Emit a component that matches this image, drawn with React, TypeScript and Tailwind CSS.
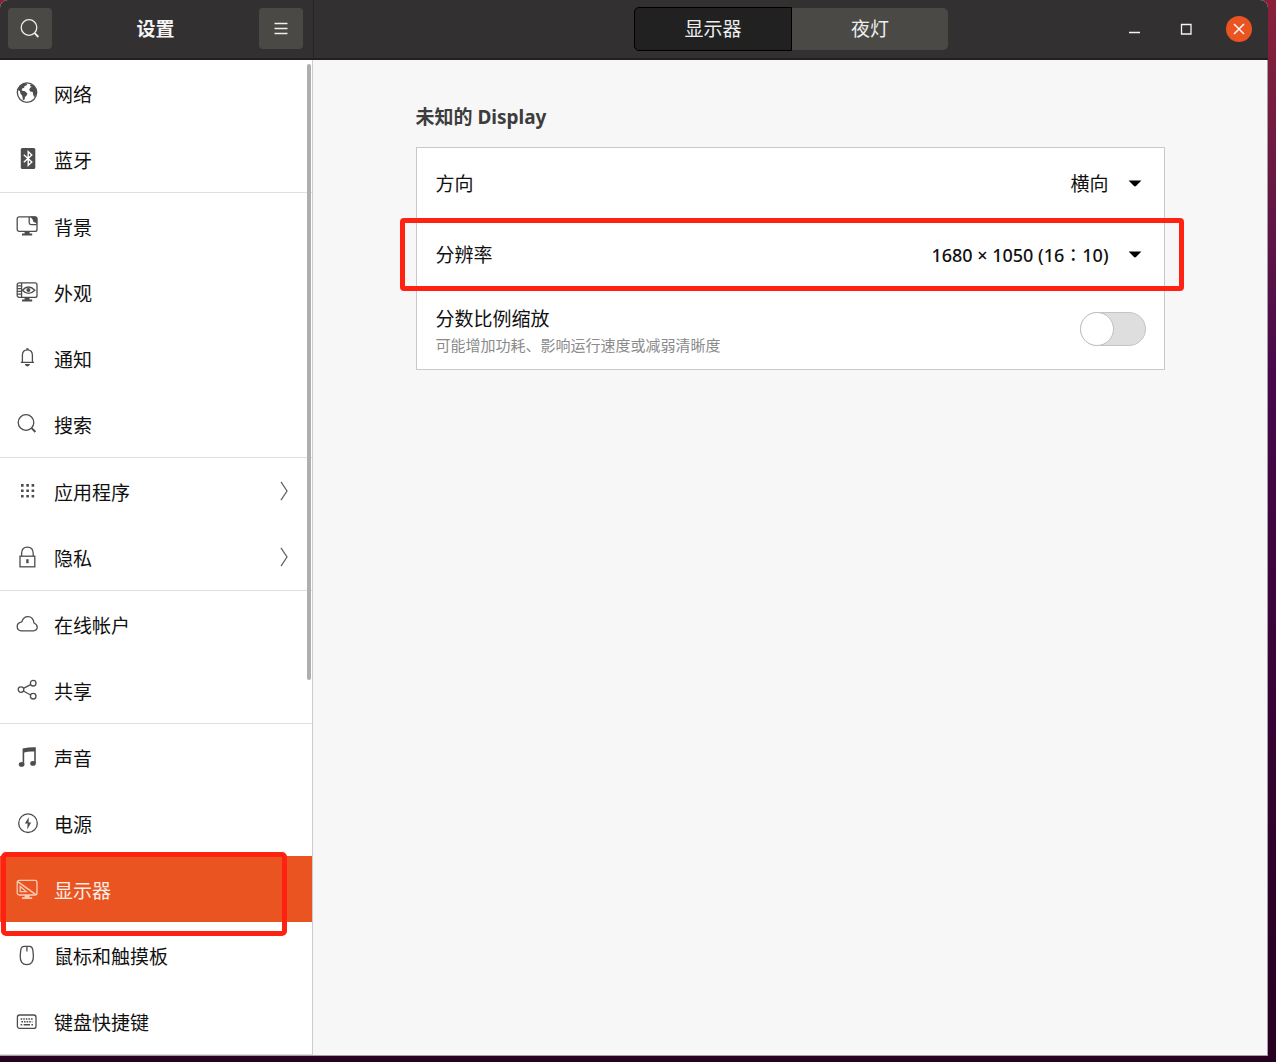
import { Fragment, type ReactNode } from 'react'

type Item = {
  label: string
  icon: ReactNode
  more?: boolean
  active?: boolean
}

function Icon({ children }: { children: ReactNode }) {
  return (
    <svg
      viewBox="0 0 22 22"
      className="size-[22px] shrink-0"
      fill="none"
      stroke="currentColor"
      strokeWidth="1.3"
      aria-hidden="true"
    >
      {children}
    </svg>
  )
}

const searchShape = (
  <>
    <circle cx="10" cy="9.5" r="7.8" />
    <path d="M15.6 15.2 19.4 19" strokeWidth="1.9" />
  </>
)

const monitorShape = (
  <>
    <rect x="1.2" y="1.8" width="19.8" height="14.6" rx="2" />
    <path d="M8.6 16.4h5v2.2h2.6v1.8H6v-1.8h2.6z" fill="currentColor" stroke="none" />
  </>
)

const groups: Item[][] = [
  [
    {
      label: '网络',
      icon: (
        <Icon>
          <circle cx="11" cy="10.6" r="9.7" />
          <path
            d="M2 7.8C3.2 4.4 5.6 2 9 1.2l2.4.6-1 1.6-1.8.6-.4 1.8-2 .8-.6 1.8 3.4.8 2.4 2.2-.8 2.2-1.6 1.4-.4 2.4-1.6.8-.8-4.4-1.8-2.2-.4-2.4zM14 2.8l2.4.2c2.2 1.4 3.8 3.8 4.2 6.4l-.8 3.8-1.6 2-1.2-3-.2-2.2-2.6-.4-1-2 1.2-2.2 1.6-.6-1.8-.6z"
            fill="currentColor"
            stroke="none"
          />
        </Icon>
      ),
    },
    {
      label: '蓝牙',
      icon: (
        <Icon>
          <rect x="4.8" y="0" width="14.5" height="21" rx="1.6" fill="currentColor" stroke="none" />
          <path d="M7.8 6.7 15.8 14.1 12.2 17.5V3.5L15.8 6.9 7.8 14.3" stroke="#fff" strokeWidth="1.4" />
        </Icon>
      ),
    },
  ],
  [
    {
      label: '背景',
      icon: (
        <Icon>
          {monitorShape}
          <path d="M13.2 2v5.8q0 1.8 1.8 1.8h5.8" />
          <path d="M13.2 1.4h5.8q2.2 0 2.2 2.2v6q-.8-2.4-3.8-2.6-.2-3.6-4.2-5.6z" fill="currentColor" stroke="none" />
        </Icon>
      ),
    },
    {
      label: '外观',
      icon: (
        <Icon>
          {monitorShape}
          <path d="M5.6 2v14.4M1.2 4.8h4.4M1.2 7.6h4.4M1.2 10.4h4.4M1.2 13.2h4.4" />
          <path d="M6.4 9.2Q12.5 2.8 18.8 9.2 12.5 15.6 6.4 9.2z" />
          <circle cx="12.4" cy="9" r="2" fill="currentColor" stroke="none" />
        </Icon>
      ),
    },
    {
      label: '通知',
      icon: (
        <Icon>
          <path d="M6.4 15V8.2q0-5.4 5-5.4t5 5.4V15M4.8 15.3h13.2" />
          <path d="M8.8 17h5.2q-.6 2.4-2.6 2.4T8.8 17zM10.2 1.2h2.4v1.6h-2.4z" fill="currentColor" stroke="none" />
        </Icon>
      ),
    },
    { label: '搜索', icon: <Icon>{searchShape}</Icon> },
  ],
  [
    {
      label: '应用程序',
      more: true,
      icon: (
        <Icon>
          <path d="M5 5.4H18.2M5 10.8H18.2M5 16.2H18.2" strokeWidth="2.6" strokeDasharray="2.6 2.7" />
        </Icon>
      ),
    },
    {
      label: '隐私',
      more: true,
      icon: (
        <Icon>
          <rect x="4" y="10.2" width="14.8" height="10.6" />
          <path d="M5.6 10V7.6q0-6.4 5.8-6.4t5.8 6.4V10" />
          <path d="M10.2 13.2h2.4v4h-2.4z" fill="currentColor" stroke="none" />
        </Icon>
      ),
    },
  ],
  [
    {
      label: '在线帐户',
      icon: (
        <Icon>
          <path d="M5.4 17.8Q1.2 17.4 1.2 13.4q0-3.6 4.6-4.6Q7.2 3.6 12 3.6q5 0 6 6.4 3.2 1.4 3.2 4.2 0 3.2-4 3.6z" />
        </Icon>
      ),
    },
    {
      label: '共享',
      icon: (
        <Icon>
          <circle cx="5" cy="10.6" r="2.8" />
          <circle cx="17.2" cy="4.2" r="2.8" />
          <circle cx="17.2" cy="17.2" r="2.8" />
          <path d="M7.4 9.4 14.6 5.6M7.4 12l7.2 4" />
        </Icon>
      ),
    },
  ],
  [
    {
      label: '声音',
      icon: (
        <Icon>
          <g fill="currentColor" stroke="none">
            <path d="M6.6 2.6Q13 1 19.8 1.2v16h-1.6V5.6Q13 5 8.2 6.6v12.2H6.6z" />
            <ellipse cx="5.6" cy="18.4" rx="2.8" ry="2.4" />
            <ellipse cx="17" cy="17.4" rx="2.8" ry="2.4" />
          </g>
        </Icon>
      ),
    },
    {
      label: '电源',
      icon: (
        <Icon>
          <circle cx="12" cy="11.2" r="9.3" />
          <path d="M12.8 5.2 8.8 11.6h2.8l-.4 5.8 4-6.8h-2.6z" fill="currentColor" stroke="none" />
        </Icon>
      ),
    },
    {
      label: '显示器',
      active: true,
      icon: (
        <Icon>
          <rect x="1.2" y="2.4" width="19.8" height="14.6" rx="2" />
          <path d="M8.6 17h5v2.2h2.6V21H6v-1.8h2.6z" fill="currentColor" stroke="none" />
          <path d="M1.4 3.4 19.8 16.6" strokeWidth="1.6" />
          <path d="M4.2 8.4v5.2h6z" />
        </Icon>
      ),
    },
    {
      label: '鼠标和触摸板',
      icon: (
        <Icon>
          <path d="M8.2 2.4h5.4q2.6 0 3.2 3.4l.6 5.8q.2 9-6.6 9t-6.6-9l.6-5.8Q5.4 2.4 8.2 2.4zM10.9 2.6v5" />
        </Icon>
      ),
    },
    {
      label: '键盘快捷键',
      icon: (
        <Icon>
          <rect x="1.4" y="5" width="18.6" height="13.4" rx="2.2" />
          <path d="M4.6 9h12.4M5.4 11.8h11" strokeDasharray="1.6 1" strokeWidth="1.4" />
          <path d="M4.6 14.8h1.6M7.6 14.8H14M15.4 14.8H17" strokeWidth="1.4" />
        </Icon>
      ),
    },
  ],
]

function NavRow({ item }: { item: Item }) {
  return (
    <li className="relative">
      <button
        type="button"
        className={
          item.active
            ? 'flex h-[66px] w-full items-center bg-[#e95420] pl-4 pr-6 text-left text-[#fdeee8]'
            : 'flex h-[66px] w-full items-center pl-4 pr-6 text-left text-[#111]'
        }
      >
        <span className={item.active ? 'mr-4 text-[#f9c9b6]' : 'mr-4 text-[#4d4d4d]'}>{item.icon}</span>
        <span className="flex-1 pt-1">{item.label}</span>
        {item.more && (
          <svg viewBox="0 0 8 20" className="h-5 w-2" fill="none" stroke="#666" strokeWidth="1.3" aria-hidden="true">
            <path d="M1 .8 7 10 1 19.2" />
          </svg>
        )}
      </button>
      {item.active && (
        <span className="pointer-events-none absolute -bottom-[14px] -top-[4px] left-px right-[25px] z-10 rounded-[5px] border-5 border-[#ff2112]" />
      )}
    </li>
  )
}

function SelectRow({ id, label, options, className }: { id: string; label: string; options: string[]; className?: string }) {
  return (
    <div className="flex h-[71px] items-center justify-between pl-[19px] pr-[22px]">
      <label htmlFor={id}>{label}</label>
      <div className="relative">
        <select
          id={id}
          className={`h-10 appearance-none bg-transparent pr-[33px] [text-align-last:right] ${className ?? ''}`}
        >
          {options.map(o => (
            <option key={o}>{o}</option>
          ))}
        </select>
        <svg
          viewBox="0 0 14 8"
          className="pointer-events-none absolute right-0 top-4 h-2 w-[14px]"
          aria-hidden="true"
        >
          <path d="M.6.4h12.8L8 6q-1 .9-2 0z" fill="#000" />
        </svg>
      </div>
    </div>
  )
}

export default function App() {
  return (
    <div className="min-h-screen bg-linear-to-b from-[#8a2038] via-[#48084a] via-35% to-[#270122] to-95% pb-[5px] pr-2 font-['Noto_Sans','Noto_Sans_CJK_SC',sans-serif] text-[19px] leading-7 text-[#111]">
      <div className="flex flex-col overflow-hidden rounded-t-lg bg-[#f7f7f7]">
        <header className="flex h-[60px] border-b-2 border-[#211f20] bg-[#333031]">
          <div className="flex w-[314px] items-center justify-between border-r border-[#272526] pb-px pl-2 pr-[10px]">
            <button
              type="button"
              aria-label="搜索"
              className="flex h-[41px] w-11 items-center justify-center rounded-[4px] bg-[#4a4945] text-[#eee]"
            >
              <Icon>{searchShape}</Icon>
            </button>
            <h1 className="font-bold text-[#f4f4f4]">设置</h1>
            <button
              type="button"
              aria-label="菜单"
              className="flex h-[41px] w-11 items-center justify-center rounded-[4px] bg-[#4a4945] text-[#eee]"
            >
              <Icon>
                <path d="M4.5 5.5h13M4.5 10.5h13M4.5 15.5h13" />
              </Icon>
            </button>
          </div>
          <div className="grid flex-1 grid-cols-[1fr_auto_1fr] items-center pb-px pr-4">
            <div className="col-start-2 flex pl-4 text-[#eee]" role="tablist">
              <button
                type="button"
                role="tab"
                aria-selected="true"
                className="h-11 w-[158px] rounded-l-[5px] border border-black bg-[#212121]"
              >
                显示器
              </button>
              <button
                type="button"
                role="tab"
                aria-selected="false"
                className="my-px h-[42px] w-[156px] rounded-r-[5px] bg-[#4a4945]"
              >
                夜灯
              </button>
            </div>
            <div className="flex items-center justify-end gap-[28px] text-[#f4f4f4]">
              <button type="button" aria-label="最小化" className="size-6">
                <svg viewBox="0 0 24 24" aria-hidden="true">
                  <path d="M7 15.5h11" stroke="currentColor" strokeWidth="1.4" />
                </svg>
              </button>
              <button type="button" aria-label="最大化" className="size-6">
                <svg viewBox="0 0 24 24" aria-hidden="true">
                  <path d="M7.5 7.5h9.5v9.5H7.5z" fill="none" stroke="currentColor" strokeWidth="1.3" />
                </svg>
              </button>
              <button
                type="button"
                aria-label="关闭"
                className="size-[26px] rounded-full bg-[#e95420]"
              >
                <svg viewBox="0 0 26 26" aria-hidden="true">
                  <path d="m8 8 10 10M18 8 8 18" stroke="currentColor" strokeWidth="1.6" />
                </svg>
              </button>
            </div>
          </div>
        </header>

        <div className="flex border-b border-r border-[#a89aa8]">
          <nav className="relative w-[313px] shrink-0 border-r border-[#cdcdcd] bg-white">
            <ul>
              {groups.map((group, i) => (
                <Fragment key={i}>
                  {group.map(item => (
                    <NavRow key={item.label} item={item} />
                  ))}
                  <li className="h-px bg-[#dfdfdf]" aria-hidden="true" />
                </Fragment>
              ))}
            </ul>
            {/* scroll thumb */}
            <span className="absolute right-px top-1 h-[616px] w-1 rounded-full bg-[#aeaeae]" />
          </nav>

          <main className="min-w-0 flex-1 px-6 pt-[43px]">
            <section className="mx-auto max-w-[749px]">
              <h2 className="mb-4 font-bold text-[#3d3d3d]">未知的 Display</h2>
              <div className="border border-[#c9c9c9] bg-white">
                <SelectRow id="orientation" label="方向" options={['横向', '纵向']} />
                <div className="relative">
                  <SelectRow
                    id="resolution"
                    label="分辨率"
                    options={['1680 × 1050 (16∶10)']}
                    className="text-[18px] font-medium"
                  />
                  <span className="pointer-events-none absolute -inset-y-px -left-[17px] -right-[20px] rounded-[4px] border-5 border-[#ff2112]" />
                </div>
                <div className="flex h-[79px] items-center justify-between pb-[2px] pl-[19px] pr-[18px]">
                  <div className="pt-1">
                    <label htmlFor="scaling" className="block">
                      分数比例缩放
                    </label>
                    <p className="text-[15px] leading-6 text-[#8b8b8b]">可能增加功耗、影响运行速度或减弱清晰度</p>
                  </div>
                  <input
                    id="scaling"
                    type="checkbox"
                    role="switch"
                    className="relative h-[34px] w-[66px] appearance-none rounded-full border border-[#c4c4c4] bg-[#dedede] before:absolute before:-left-px before:-top-px before:size-[34px] before:rounded-full before:border before:border-[#c0c0c0] before:bg-white checked:before:left-[31px]"
                  />
                </div>
              </div>
            </section>
          </main>
        </div>
      </div>
    </div>
  )
}
